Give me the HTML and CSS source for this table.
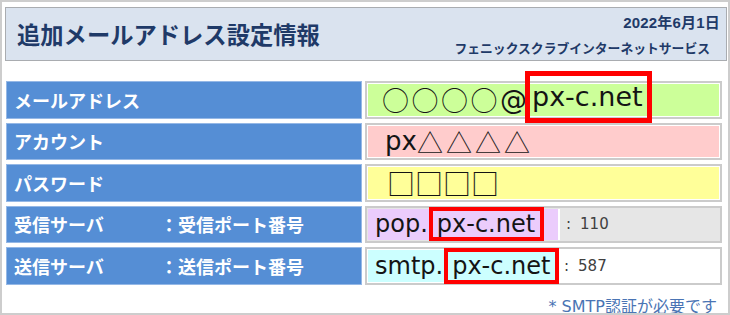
FILE: index.html
```html
<!DOCTYPE html>
<html lang="ja">
<head>
<meta charset="utf-8">
<link rel="stylesheet" href="styles.css">
</head>
<body>
<div class="frame">
  <header class="head">
    <h1 class="title">追加メールアドレス設定情報</h1>
    <div class="meta">
      <div class="date">2022年6月1日</div>
      <div class="org">フェニックスクラブインターネットサービス</div>
    </div>
  </header>

  <div class="table">
    <div class="label">メールアドレス</div>
    <div class="cell">
      <div class="fill fill-green v1">
        <span class="circles">○○○○</span><span>@</span><span class="hl hl-big">px-c.net</span>
      </div>
    </div>

    <div class="label">アカウント</div>
    <div class="cell">
      <div class="fill fill-pink v2">px<span class="tri">△△△△</span></div>
    </div>

    <div class="label">パスワード</div>
    <div class="cell">
      <div class="fill fill-yellow v3">□□□□</div>
    </div>

    <div class="label"><span class="lbl-a">受信サーバ</span><span>：受信ポート番号</span></div>
    <div class="cell cell-gray">
      <div class="fill fill-purple v4">pop.<span class="hl hl-small h26">px-c.net</span></div>
      <div class="port"><span>:</span><span>110</span></div>
    </div>

    <div class="label"><span class="lbl-a">送信サーバ</span><span>：送信ポート番号</span></div>
    <div class="cell">
      <div class="fill fill-cyan v4">smtp.<span class="hl hl-small h28">px-c.net</span></div>
      <div class="port"><span>:</span><span>587</span></div>
    </div>
  </div>

  <p class="note">* SMTP認証が必要です</p>
</div>
</body>
</html>
```

FILE: styles.css
```css
* { box-sizing: border-box; }
html, body { margin: 0; padding: 0; background: #fff; }
body { font-family: "DejaVu Sans", "Noto Sans CJK JP", sans-serif; }

.frame {
  width: 730px;
  height: 315px;
  border: 2px solid #cdcdcd;
  padding: 5px 1px 0 3px;
  overflow: hidden;
}

.head {
  height: 54px;
  border: 1px solid #a9acb0;
  background: #dae3ef;
  display: flex;
  justify-content: space-between;
  align-items: stretch;
  padding: 0 6px 0 11px;
}
.title {
  margin: 0;
  align-self: center;
  font-family: "Noto Sans CJK JP", sans-serif;
  font-weight: 700;
  font-size: 23.3px;
  line-height: 1;
  color: #1f3a68;
  padding-top: 2px;
}
.meta {
  display: flex;
  flex-direction: column;
  align-items: flex-end;
  color: #1f3a68;
  font-family: "Noto Sans CJK JP", sans-serif;
  font-weight: 700;
  padding-top: 6px;
}
.date {
  font-family: "Liberation Sans", "Noto Sans CJK JP", sans-serif;
  font-size: 15px;
  line-height: 18px;
  letter-spacing: 0.2px;
}
.org {
  font-size: 12.8px;
  line-height: 18px;
  margin-top: 7px;
  margin-right: 10px;
}

.table {
  margin: 20px 0 0 1px;
  width: 716px;
  display: grid;
  grid-template-columns: 356px 357px;
  grid-auto-rows: 37.5px;
  column-gap: 3px;
  row-gap: 4px;
}
.label {
  background: #558ed5;
  border: 1px solid #95b8e6;
  color: #fff;
  font-family: "Noto Sans CJK JP", sans-serif;
  font-weight: 700;
  font-size: 18px;
  display: flex;
  align-items: center;
  padding-left: 7px;
}
.lbl-a { width: 146px; }

.cell {
  border: 2px solid #cbcbcb;
  padding: 1px;
  background: #fff;
  display: flex;
  align-items: stretch;
}
.cell-gray { background: #e6e6e6; }

.fill {
  display: flex;
  align-items: center;
  color: #141414;
  white-space: nowrap;
}
.fill-green { background: #ccff99; flex: 1; }
.fill-pink { background: #ffcccc; flex: 1; }
.fill-yellow { background: #ffff99; flex: 1; }
.fill-purple { background: #ebccfc; width: 192px; border-right: 2px solid #fff; }
.fill-cyan { background: #ccffff; width: 190px; }

.v1 { font-size: 27px; padding-left: 14px; }
.circles { font-family: "Noto Sans CJK JP", sans-serif; letter-spacing: 2.5px; font-weight: 300; }
.v2 { font-size: 26px; padding-left: 17px; }
.tri { font-family: "Noto Sans CJK JP", sans-serif; letter-spacing: 3px; font-weight: 300; }
.v3 { font-size: 28px; padding-left: 19px; font-family: "Noto Sans CJK JP", sans-serif; font-weight: 400; letter-spacing: 0; }
.v4 { font-size: 24px; padding-left: 7px; }

.hl {
  display: block;
  outline-style: solid;
  outline-color: #ff0000;
}
.hl-big {
  outline-width: 5px;
  line-height: 42px;
  height: 42px;
  margin-top: -5px;
  margin-left: 3px;
  padding: 0 4px 0 2px;
}
.hl-small {
  outline-width: 4px;
  padding: 0 5px 0 4px;
  margin-left: 5px;
}
.h26 { height: 26px; line-height: 26px; }
.h28 { height: 28px; line-height: 28px; margin-left: 5px; }

.port {
  display: flex;
  align-items: center;
  gap: 9px;
  padding-left: 6px;
  font-size: 15px;
  color: #404040;
}

.note {
  margin: 8px 10px 0 0;
  text-align: right;
  font-family: "DejaVu Sans", "Noto Sans CJK JP", sans-serif;
  font-size: 16px;
  color: #4a74b4;
}
```
